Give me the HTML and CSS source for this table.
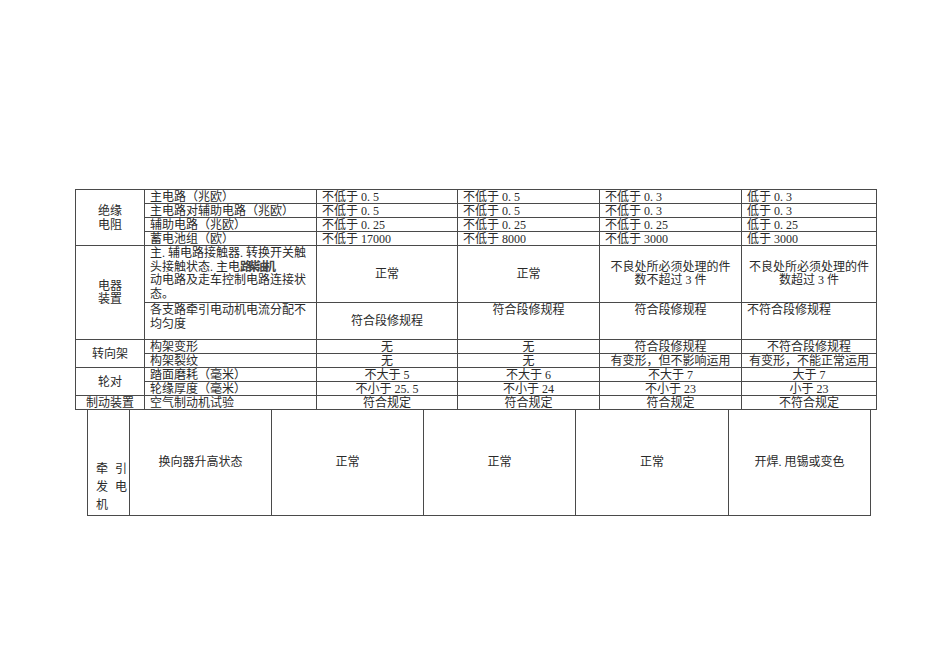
FILE: index.html
```html
<!DOCTYPE html>
<html lang="zh">
<head>
<meta charset="utf-8">
<title>检查标准</title>
<link rel="stylesheet" href="styles.css">
</head>
<body>
<div class="page">
  <table class="t1">
    <colgroup>
      <col class="c1"><col class="c2"><col class="c3"><col class="c4"><col class="c5"><col class="c6">
    </colgroup>
    <tr class="r14">
      <td rowspan="4" class="ctr blk">绝缘<br>电阻</td>
      <td class="lft">主电路（兆欧）</td>
      <td class="lft">不低于 0. 5</td>
      <td class="lft">不低于 0. 5</td>
      <td class="lft">不低于 0. 3</td>
      <td class="lft">低于 0. 3</td>
    </tr>
    <tr class="r14">
      <td class="lft">主电路对辅助电路（兆欧）</td>
      <td class="lft">不低于 0. 5</td>
      <td class="lft">不低于 0. 5</td>
      <td class="lft">不低于 0. 3</td>
      <td class="lft">低于 0. 3</td>
    </tr>
    <tr class="r14">
      <td class="lft">辅助电路（兆欧）</td>
      <td class="lft">不低于 0. 25</td>
      <td class="lft">不低于 0. 25</td>
      <td class="lft">不低于 0. 25</td>
      <td class="lft">低于 0. 25</td>
    </tr>
    <tr class="r14">
      <td class="lft">蓄电池组（欧）</td>
      <td class="lft">不低于 17000</td>
      <td class="lft">不低于 8000</td>
      <td class="lft">不低于 3000</td>
      <td class="lft">低于 3000</td>
    </tr>
    <tr class="r56">
      <td rowspan="2" class="ctr blk">电器<br>装置</td>
      <td class="lft top multi">主. 辅电路接触器. 转换开关触<br>头接触状态. 主电<span class="ovl">路柴油机</span><br>动电路及走车控制电路连接状<br>态。</td>
      <td class="ctr">正常</td>
      <td class="ctr">正常</td>
      <td class="ctr multi">不良处所必须处理的件<br>数不超过 3 件</td>
      <td class="ctr multi">不良处所必须处理的件<br>数超过 3 件</td>
    </tr>
    <tr class="r36">
      <td class="lft top multi">各支路牵引电动机电流分配不<br>均匀度</td>
      <td class="ctr">符合段修规程</td>
      <td class="ctr top">符合段修规程</td>
      <td class="ctr top">符合段修规程</td>
      <td class="lft top">不符合段修规程</td>
    </tr>
    <tr class="r14">
      <td rowspan="2" class="ctr blk">转向架</td>
      <td class="lft">构架变形</td>
      <td class="ctr">无</td>
      <td class="ctr">无</td>
      <td class="ctr">符合段修规程</td>
      <td class="ctr">不符合段修规程</td>
    </tr>
    <tr class="r14">
      <td class="lft">构架裂纹</td>
      <td class="ctr">无</td>
      <td class="ctr">无</td>
      <td class="ctr">有变形，但不影响运用</td>
      <td class="ctr">有变形，不能正常运用</td>
    </tr>
    <tr class="r14">
      <td rowspan="2" class="ctr blk">轮对</td>
      <td class="lft">踏面磨耗（毫米）</td>
      <td class="ctr">不大于 5</td>
      <td class="ctr">不大于 6</td>
      <td class="ctr">不大于 7</td>
      <td class="ctr">大于 7</td>
    </tr>
    <tr class="r14">
      <td class="lft">轮缘厚度（毫米）</td>
      <td class="ctr">不小于 25. 5</td>
      <td class="ctr">不小于 24</td>
      <td class="ctr">不小于 23</td>
      <td class="ctr">小于 23</td>
    </tr>
    <tr class="r14">
      <td class="ctr">制动装置</td>
      <td class="lft">空气制动机试验</td>
      <td class="ctr">符合规定</td>
      <td class="ctr">符合规定</td>
      <td class="ctr">符合规定</td>
      <td class="ctr">不符合规定</td>
    </tr>
  </table>

  <table class="t2">
    <colgroup>
      <col class="d1"><col class="d2"><col class="d3"><col class="d4"><col class="d5"><col class="d6">
    </colgroup>
    <tr class="r107">
      <td class="gen">牵<span class="gap"></span>引<br>发<span class="gap"></span>电<br>机</td>
      <td class="ctr lite">换向器升高状态</td>
      <td class="ctr">正常</td>
      <td class="ctr lite">正常</td>
      <td class="ctr">正常</td>
      <td class="ctr">开焊. 甩锡或变色</td>
    </tr>
  </table>
</div>
</body>
</html>
```

FILE: styles.css
```css
html, body {
  margin: 0;
  padding: 0;
  background: #ffffff;
}

.page {
  padding: 189px 0 0 75px;
  font-family: "Liberation Serif", "Noto Sans CJK SC", serif;
  font-size: 12px;
  color: #2a2a2a;
}

table {
  border-collapse: collapse;
  table-layout: fixed;
}

td {
  border: 1px solid #4a4a4a;
  padding: 0 4px;
  line-height: 13px;
  white-space: nowrap;
  overflow: hidden;
}

.t1 {
  width: 801px;
}

.c1 { width: 69px; }
.c2 { width: 172px; }
.c3 { width: 141px; }
.c4 { width: 142px; }
.c5 { width: 142px; }
.c6 { width: 135px; }

.r14 td {
  height: 12px;
  line-height: 12px;
  padding-top: 1px;
}
.r14 td.blk {
  line-height: 14px;
  padding-top: 0;
}
.r56 td { height: 55px; }
.r36 td { height: 35px; }

.lft {
  text-align: left;
  padding-left: 5px;
}

.ctr {
  text-align: center;
  vertical-align: middle;
}

.top {
  vertical-align: top;
  padding-top: 1px;
}

.multi {
  line-height: 13.5px;
}

.ovl {
  letter-spacing: -4px;
  font-weight: 700;
  color: #444;
}

.t2 {
  width: 783px;
  margin-left: 12px;
}

.t2 td {
  border-top: none;
}

.d1 { width: 42px; }
.d2 { width: 142px; }
.d3 { width: 152px; }
.d4 { width: 152px; }
.d5 { width: 153px; }
.d6 { width: 142px; }

.r107 td { height: 104px; }

.t2 .lite {
  border-left-color: #8a8a8a;
}

.gen {
  vertical-align: bottom;
  text-align: left;
  padding: 0 0 1px 8px;
  line-height: 18px;
}

.gap {
  display: inline-block;
  width: 7px;
}
```
